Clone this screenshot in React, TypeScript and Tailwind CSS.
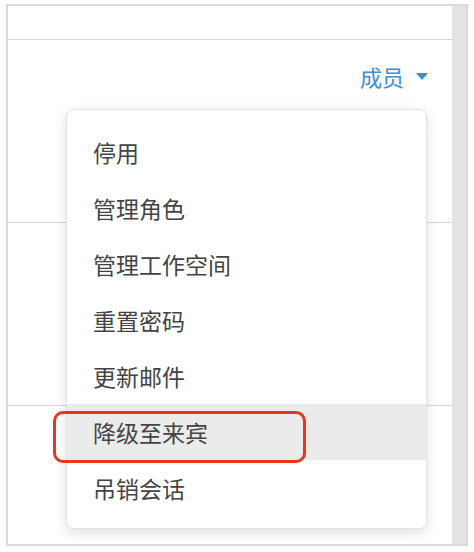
import React from 'react';

const items = ['停用', '管理角色', '管理工作空间', '重置密码', '更新邮件', '降级至来宾', '吊销会话'];

export default function App() {
  return (
    <div
      className="relative w-[474px] h-[552px] bg-white pt-1 pl-1.5"
      style={{ fontFamily: '"Noto Sans CJK SC", "Noto Sans", sans-serif' }}
    >
      {/* table frame */}
      <div className="w-[462px] h-[542px] border-2 border-[#dadada] flex">
        <div className="flex-1 flex flex-col">
          <div className="h-[34px] border-b border-[#d6d6d6]" />
          <div className="h-[183px] border-b border-[#d6d6d6] flex justify-end items-start pt-[25px] pr-[24px]">
            <button className="flex items-center gap-[12px] text-[22px] leading-none text-[#3b8fd2]">
              成员
              <svg width="12" height="7" viewBox="0 0 12 7" className="mt-[1px]">
                <path d="M0 0h12L6 7z" fill="#3b8fd2" />
              </svg>
            </button>
          </div>
          <div className="h-[183px] border-b border-[#d6d6d6]" />
          <div className="flex-1" />
        </div>
        <div className="w-[14px] bg-[#e4e4e4]" />
      </div>

      {/* dropdown menu */}
      <div className="absolute left-[66px] top-[109px] w-[361px] h-[420px] bg-white border border-[#e2e2e2] rounded-[7px] shadow-[0_4px_14px_rgba(0,0,0,0.12)] pt-[14px]">
        {items.map((t, i) => (
          <div
            key={t}
            className={`h-[56px] flex items-center pl-[26px] text-[23px] text-[#444] ${i === 5 ? 'bg-[#ebebeb]' : ''}`}
          >
            {t}
          </div>
        ))}
      </div>

      {/* annotation */}
      <div className="absolute left-[53px] top-[411px] w-[253px] h-[52px] border-[3px] border-[#e8361e] rounded-[10px]" />
    </div>
  );
}
